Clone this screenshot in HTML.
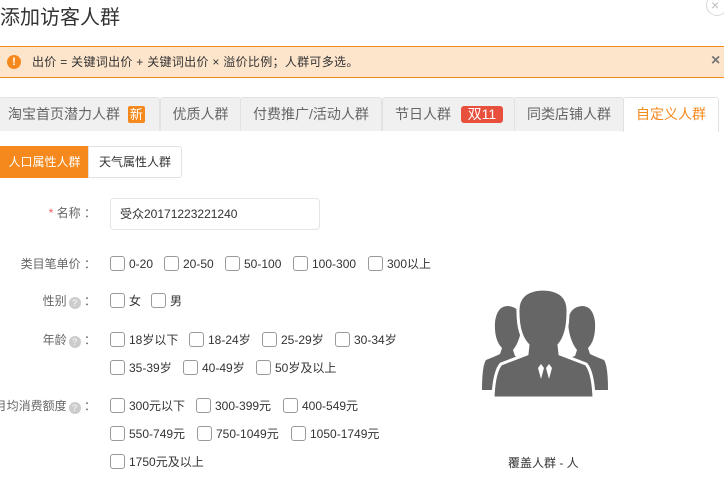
<!DOCTYPE html>
<html><head><meta charset="utf-8"><style>
*{margin:0;padding:0;box-sizing:border-box}
body{width:724px;height:487px;overflow:hidden;background:#fff;position:relative;font-family:"Liberation Sans","Noto Sans CJK SC",sans-serif;color:#333;font-size:12px}
.a{position:absolute;white-space:nowrap}
.tab{position:absolute;top:97px;height:34px;background:#f0f0f0;border:1px solid #e2e2e2;border-bottom:none;font-size:14px;color:#666;line-height:33px;text-align:center;border-radius:3px 3px 0 0;white-space:nowrap}
.lbl{position:absolute;right:628px;color:#666;font-size:12px;line-height:14px;white-space:nowrap}
.cb{position:absolute;width:15px;height:15px;border:1px solid #9a9a9a;border-radius:3px;background:#fff}
.t{position:absolute;font-size:12px;line-height:14px;color:#333;white-space:nowrap}
.q{display:inline-block;width:12px;height:12px;border-radius:50%;background:#ccc;color:#fff;font-size:9px;line-height:12px;text-align:center;vertical-align:-1px;margin-left:2px}
</style></head><body>
<div class="a" style="left:0;top:5px;font-size:20px;line-height:26px;color:#333">添加访客人群</div>
<div class="a" style="left:706px;top:-6px;width:22px;height:22px;border:1px solid #d8d8d8;border-radius:50%;color:#bbb;font-size:14px;line-height:20px;padding-left:4px">×</div>

<div class="a" style="left:0;top:46px;width:724px;height:32px;background:#fde5cc;border-top:1px solid #f5891d;border-bottom:1px solid #f5891d"></div>
<div class="a" style="left:7px;top:55px;width:14px;height:14px;border-radius:50%;background:#f5891d;color:#fff;font-size:11px;font-weight:bold;line-height:14px;text-align:center">!</div>
<div class="a" style="left:32px;top:55px;font-size:12px;line-height:14px;color:#333;letter-spacing:0.3px">出价 = 关键词出价 + 关键词出价 × 溢价比例；人群可多选。</div>
<div class="a" style="left:711px;top:52px;font-size:16px;font-weight:bold;color:#777;line-height:18px">×</div>

<div class="a" style="left:0;top:130px;width:718px;height:1px;background:#e2e2e2"></div>
<div class="tab" style="left:-1px;width:161px;text-align:left;padding-left:8px">淘宝首页潜力人群 <span style="display:inline-block;background:#f5891d;color:#fff;width:17px;height:17px;line-height:17px;text-align:center;border-radius:2px;margin-left:4px;font-size:13px">新</span></div>
<div class="tab" style="left:160px;width:81px">优质人群</div>
<div class="tab" style="left:240px;width:142px">付费推广/活动人群</div>
<div class="tab" style="left:382px;width:133px;text-align:left;padding-left:12px">节日人群 <span style="display:inline-block;background:#e8503e;color:#fff;width:42px;height:17px;line-height:17px;text-align:center;border-radius:3px;margin-left:6px;font-size:14px">双11</span></div>
<div class="tab" style="left:514px;width:110px">同类店铺人群</div>
<div class="tab" style="left:623px;width:96px;background:#fff;color:#f5891d;height:35px">自定义人群</div>

<div class="a" style="left:0;top:146px;width:89px;height:32px;background:#f5891d;color:#fff;line-height:32px;text-align:center">人口属性人群</div>
<div class="a" style="left:88px;top:146px;width:94px;height:32px;border:1px solid #e2e2e2;color:#333;line-height:30px;text-align:center;border-radius:0 3px 3px 0">天气属性人群</div>

<div class="lbl" style="top:206px"><span style="color:#f06060">*</span> 名称 ：</div>
<div class="a" style="left:110px;top:198px;width:210px;height:32px;border:1px solid #e5e5e5;border-radius:4px;padding-left:9px;line-height:30px;font-size:12px">受众20171223221240</div>

<div class="lbl" style="top:257px">类目笔单价 ：</div>
<div class="lbl" style="top:294px">性别<span class="q">?</span> ：</div>
<div class="lbl" style="top:333px">年龄<span class="q">?</span> ：</div>
<div class="lbl" style="top:399px">月均消费额度<span class="q">?</span> ：</div>

<div class="cb" style="left:110px;top:256px"></div><div class="t" style="left:129px;top:257px">0-20</div>
<div class="cb" style="left:164px;top:256px"></div><div class="t" style="left:183px;top:257px">20-50</div>
<div class="cb" style="left:225px;top:256px"></div><div class="t" style="left:244px;top:257px">50-100</div>
<div class="cb" style="left:293px;top:256px"></div><div class="t" style="left:312px;top:257px">100-300</div>
<div class="cb" style="left:368px;top:256px"></div><div class="t" style="left:387px;top:257px">300以上</div>

<div class="cb" style="left:110px;top:293px"></div><div class="t" style="left:129px;top:294px">女</div>
<div class="cb" style="left:151px;top:293px"></div><div class="t" style="left:170px;top:294px">男</div>

<div class="cb" style="left:110px;top:332px"></div><div class="t" style="left:129px;top:333px">18岁以下</div>
<div class="cb" style="left:189px;top:332px"></div><div class="t" style="left:208px;top:333px">18-24岁</div>
<div class="cb" style="left:262px;top:332px"></div><div class="t" style="left:281px;top:333px">25-29岁</div>
<div class="cb" style="left:335px;top:332px"></div><div class="t" style="left:354px;top:333px">30-34岁</div>
<div class="cb" style="left:110px;top:360px"></div><div class="t" style="left:129px;top:361px">35-39岁</div>
<div class="cb" style="left:183px;top:360px"></div><div class="t" style="left:202px;top:361px">40-49岁</div>
<div class="cb" style="left:256px;top:360px"></div><div class="t" style="left:275px;top:361px">50岁及以上</div>

<div class="cb" style="left:110px;top:398px"></div><div class="t" style="left:129px;top:399px">300元以下</div>
<div class="cb" style="left:196px;top:398px"></div><div class="t" style="left:215px;top:399px">300-399元</div>
<div class="cb" style="left:283px;top:398px"></div><div class="t" style="left:302px;top:399px">400-549元</div>
<div class="cb" style="left:110px;top:426px"></div><div class="t" style="left:129px;top:427px">550-749元</div>
<div class="cb" style="left:197px;top:426px"></div><div class="t" style="left:216px;top:427px">750-1049元</div>
<div class="cb" style="left:291px;top:426px"></div><div class="t" style="left:310px;top:427px">1050-1749元</div>
<div class="cb" style="left:110px;top:454px"></div><div class="t" style="left:129px;top:455px">1750元及以上</div>

<svg class="a" style="left:0;top:0" width="724" height="487" viewBox="0 0 724 487">
<g fill="#666">
<path d="M495 322 Q497 306 508 306 Q521 307 522 322 Q521 340 513 350 L515 356 L527 360 L527 390 L482 390 Q482 366 486 360 Q496 356 500 354 L502 348 Q494 340 495 322Z"/>
<path d="M595 322 Q593 306 582 306 Q569 307 568 322 Q569 340 577 350 L575 356 L563 360 L563 390 L608 390 Q608 366 604 360 Q594 356 590 354 L588 348 Q596 340 595 322Z"/>
<path d="M518 312 Q517 290 543 289 Q569 290 568 312 Q568 335 559 345 L560 354 L586 364 Q593 372 594 398 L493 398 Q494 372 501 364 L527 354 L528 345 Q518 335 518 312Z" stroke="#fff" stroke-width="3"/>
</g>
<path d="M538 368 L541 364 L544 368 L541 379Z M546 368 L549 364 L552 368 L549 379Z" fill="#fff"/>
</svg>
<div class="a" style="left:508px;top:456px;font-size:12px;color:#333;line-height:14px">覆盖人群 - 人</div>
</body></html>
